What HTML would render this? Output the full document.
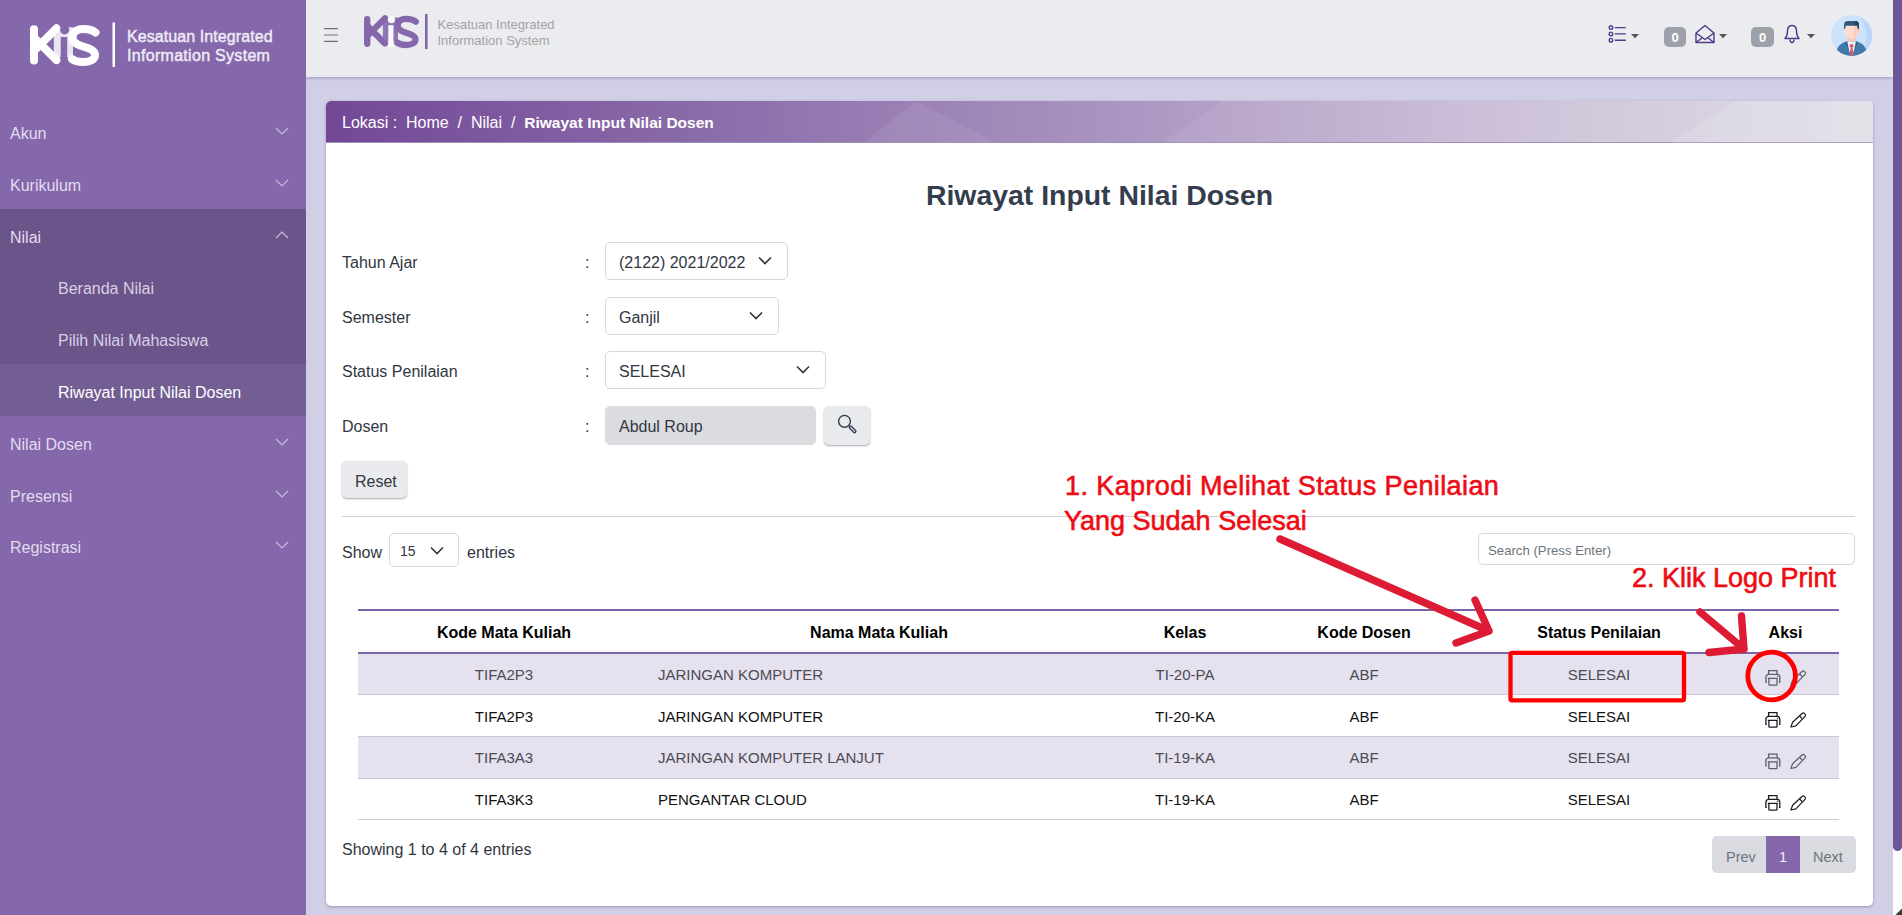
<!DOCTYPE html>
<html><head><meta charset="utf-8">
<style>
*{box-sizing:border-box;margin:0;padding:0}
html,body{width:1902px;height:915px;overflow:hidden;background:#D1CFE6;font-family:"Liberation Sans",sans-serif;}
.abs{position:absolute}
#sidebar{position:absolute;left:0;top:0;width:306px;height:915px;background:#8468AB;}
.nav{position:absolute;left:0;width:306px;height:52px;color:#E3DCEF;font-size:16px;}
.nav span{position:absolute;left:10px;top:18.5px;line-height:18px;white-space:nowrap}
.nav.sub span{left:58px}
.nav svg{position:absolute;left:275px;top:21px}
#topbar{position:absolute;left:306px;top:0;width:1587px;height:77px;background:#EBECEF;box-shadow:0 1px 3px rgba(90,90,130,.45);}
#scroll{position:absolute;left:1893px;top:0;width:9px;height:915px;background:#fff}
#thumb{position:absolute;left:1893px;top:0;width:9px;height:851px;background:#6E5595;border-radius:0 0 5px 5px}
#card{position:absolute;left:326px;top:101px;width:1547px;height:805px;background:#fff;border-radius:5px;box-shadow:0 1px 3px rgba(70,70,120,.45);overflow:hidden}
#crumb{position:absolute;left:0;top:0;width:1547px;height:42px;background:linear-gradient(90deg,#724896 0%,#8B6DAA 25%,#A993C0 50%,#C9BCD6 75%,#DEDCE5 100%);border-bottom:1px solid #9C8BB5}
#crumb .t{position:absolute;left:16px;top:13px;color:#fff;font-size:16px;line-height:18px;white-space:nowrap}
.lbl{position:absolute;left:16px;font-size:16px;color:#31363F;line-height:18px;white-space:nowrap}
.colon{position:absolute;left:259px;font-size:16px;color:#31363F;line-height:18px}
.sel{position:absolute;left:279px;height:38px;border:1px solid #D6D8DC;border-radius:5px;background:#fff;font-size:16px;color:#31363F}
.sel span{position:absolute;left:13px;top:11px;line-height:18px;white-space:nowrap}
.sel svg{position:absolute;top:13px}
.btn{position:absolute;background:#E9EAEE;border-radius:5px;box-shadow:0 1px 2px rgba(0,0,0,.35)}
table{border-collapse:collapse;position:absolute;left:32px;top:508px;width:1481px;table-layout:fixed}
th{font-size:16px;font-weight:bold;color:#000;height:43px;text-align:center;border-top:2px solid #7C64A8;border-bottom:2px solid #7C64A8;padding-top:2px}
td{font-size:15px;height:41.7px;text-align:center;border-bottom:1px solid #C9C8D4;color:#111;padding-top:1px}
tr.odd td{background:#E5E1EE;color:#4B4B55}
td.l{text-align:left;padding-left:8px}
.red{position:absolute;color:#EE0C14;font-size:27px;line-height:34px;white-space:nowrap;-webkit-text-stroke:0.6px #EE0C14}
</style></head>
<body>
<div id="sidebar">
  <svg class="abs" style="left:0;top:0" width="306" height="100">
    <defs>
      <g id="kiis">
        <rect x="24" y="2" width="19.2" height="30.3" fill="var(--lt)"/>
        <g fill="none" stroke="var(--fg)" stroke-linecap="round" stroke-width="8">
          <path d="M4.2 4V35.3"/>
          <path d="M4.2 25.6L26.7 3.1M4.2 12.4L26.7 34.9"/>
          <path d="M65.7 7.3C62.2 4.3 57.2 3.8 53.2 3.8C46.2 3.8 42.7 7.8 42.7 12.3C42.7 17.8 48.2 19.8 53.2 21.3C60.2 23.3 65.2 25.3 65.2 29.8C65.2 34.3 60.2 36.8 53.2 36.8C48.2 36.8 44.2 35.3 42.2 33.8"/>
        </g>
        <rect x="30.9" y="11.8" width="6.5" height="27.6" fill="var(--i)"/>
        <circle cx="34.8" cy="4.6" r="4.6" fill="var(--i)"/>
      </g>
    </defs>
    <use href="#kiis" x="29.8" y="25.2" style="--fg:#fff;--lt:#E9E5F1;--i:#8468AB"/>
    <rect x="112.5" y="22.5" width="2.5" height="44.5" fill="#fff"/>
    <text x="127" y="42" fill="#EFEAF6" stroke="#EFEAF6" stroke-width="0.45" font-size="16" letter-spacing="0.08" font-family="Liberation Sans">Kesatuan Integrated</text>
    <text x="127" y="61.3" fill="#EFEAF6" stroke="#EFEAF6" stroke-width="0.45" font-size="16" letter-spacing="0.3" font-family="Liberation Sans">Information System</text>
  </svg>
  <div class="nav" style="top:106px"><span>Akun</span><svg width="14" height="8"><path d="M1 1L7 7L13 1" fill="none" stroke="#C9BCDF" stroke-width="1.2"/></svg></div>
  <div class="nav" style="top:158px"><span>Kurikulum</span><svg width="14" height="8"><path d="M1 1L7 7L13 1" fill="none" stroke="#C9BCDF" stroke-width="1.2"/></svg></div>
  <div class="abs" style="left:0;top:209px;width:306px;height:155px;background:#6A5489"></div>
  <div class="abs" style="left:0;top:364px;width:306px;height:52px;background:#735E94"></div>
  <div class="nav" style="top:210px"><span>Nilai</span><svg width="14" height="8"><path d="M1 7L7 1L13 7" fill="none" stroke="#C9BCDF" stroke-width="1.2"/></svg></div>
  <div class="nav sub" style="top:261px;color:#D9D0E6"><span>Beranda Nilai</span></div>
  <div class="nav sub" style="top:313px;color:#D9D0E6"><span>Pilih Nilai Mahasiswa</span></div>
  <div class="nav sub" style="top:365px;color:#fff"><span>Riwayat Input Nilai Dosen</span></div>
  <div class="nav" style="top:417px"><span>Nilai Dosen</span><svg width="14" height="8"><path d="M1 1L7 7L13 1" fill="none" stroke="#C9BCDF" stroke-width="1.2"/></svg></div>
  <div class="nav" style="top:469px"><span>Presensi</span><svg width="14" height="8"><path d="M1 1L7 7L13 1" fill="none" stroke="#C9BCDF" stroke-width="1.2"/></svg></div>
  <div class="nav" style="top:520px"><span>Registrasi</span><svg width="14" height="8"><path d="M1 1L7 7L13 1" fill="none" stroke="#C9BCDF" stroke-width="1.2"/></svg></div>
</div>

<div id="topbar">
  <svg class="abs" style="left:0;top:0" width="300" height="77">
    <g stroke="#707070" stroke-width="1.2"><path d="M18 28.6H32M18 35H32M18 41.4H32"/></g>
    <use href="#kiis" transform="translate(57.9 15.9) scale(0.79)" style="--fg:#8468AB;--lt:#8D76B4;--i:#FAF9FD"/>
    <rect x="119" y="14" width="2.6" height="35" fill="#8468AB"/>
    <text x="131.5" y="29.2" fill="#A3A3A7" font-size="13" font-family="Liberation Sans">Kesatuan Integrated</text>
    <text x="131.5" y="45" fill="#A3A3A7" font-size="13" font-family="Liberation Sans">Information System</text>
  </svg>
  </div>
<svg class="abs" style="left:0;top:0" width="1902" height="77">
    <g fill="none" stroke="#50388A" stroke-width="1.4">
      <circle cx="1611" cy="27.6" r="1.8"/><circle cx="1611" cy="33.9" r="1.8"/><circle cx="1611" cy="40.2" r="1.8"/>
      <path d="M1614.8 27.6H1625.8M1614.8 33.9H1625.8M1614.8 40.2H1625.8"/>
    </g>
    <path d="M1631 34H1639L1635 38.2Z" fill="#555"/>
    <rect x="1664" y="27" width="22" height="20" rx="5" fill="#9EA1A9"/>
    <text x="1675" y="42" fill="#fff" font-size="13" font-weight="bold" text-anchor="middle" font-family="Liberation Sans">0</text>
    <g fill="none" stroke="#50388A" stroke-width="1.4" stroke-linejoin="round">
      <path d="M1696 33L1705 25.5L1714 33V42.5H1696Z"/>
      <path d="M1696 33L1705 39.5L1714 33M1696 42.5L1702.5 37.5M1714 42.5L1707.5 37.5"/>
    </g>
    <path d="M1719 34H1727L1723 38.2Z" fill="#555"/>
    <rect x="1751" y="27" width="23" height="20" rx="5" fill="#9EA1A9"/>
    <text x="1762.5" y="42" fill="#fff" font-size="13" font-weight="bold" text-anchor="middle" font-family="Liberation Sans">0</text>
    <g fill="none" stroke="#50388A" stroke-width="1.4" stroke-linejoin="round">
      <path d="M1785 38.5C1787 36.5 1787.5 34 1787.5 31C1787.5 27.5 1789.5 25.5 1792 25.5C1794.5 25.5 1796.5 27.5 1796.5 31C1796.5 34 1797 36.5 1799 38.5Z"/>
      <path d="M1790 39.5C1790 41.5 1791 42.5 1792 42.5C1793 42.5 1794 41.5 1794 39.5"/>
    </g>
    <path d="M1807 34H1815L1811 38.2Z" fill="#555"/>
    <circle cx="1851.6" cy="35.4" r="20.5" fill="#CDE3FC"/>
    <clipPath id="av"><circle cx="1851.6" cy="35.4" r="20.5"/></clipPath>
    <g clip-path="url(#av)">
      <path d="M1858.4 14.5Q1871 30 1863.5 50L1880 50L1880 10Z" fill="#BBD6FA"/>
      <path d="M1836.3 52Q1837.5 43.5 1847.5 41L1855.7 41Q1865.5 43.5 1866.8 52L1867 60L1836 60Z" fill="#4079AA"/>
      <path d="M1847.3 41.2L1851.6 56L1845.5 43Z M1855.9 41.2L1851.6 56L1857.7 43Z" fill="#2F5F8B"/>
      <path d="M1847.2 41.2H1855.9L1854 51L1851.6 55.5L1849.2 51Z" fill="#EAF7FD"/>
      <rect x="1847.7" y="36" width="8" height="5.4" fill="#FBC9B4"/>
      <path d="M1850 44.2H1853.2L1853.6 46.5L1852.4 47.5H1850.8L1849.6 46.5Z M1850.8 47.5H1852.4L1853.6 54L1851.6 56.5L1849.6 54Z" fill="#D95A6B"/>
      <path d="M1844.2 28Q1844.2 25.5 1846 25.5H1857Q1858.9 25.5 1858.9 28V31Q1858.9 34 1856 36.5L1853.5 38.2Q1851.6 39.2 1849.7 38.2L1847.2 36.5Q1844.2 34 1844.2 31Z" fill="#FFDCCD"/>
      <path d="M1853.5 25.5H1857Q1858.9 25.5 1858.9 28V31Q1858.9 34 1856 36.5L1853.5 38.2Q1852.8 36.5 1853.5 34Z" fill="#FFCDBA"/>
      <path d="M1844 29.5V25Q1844 21 1848 21H1855.5Q1857.5 21 1858.5 22.5Q1859 23.5 1859 25V29.5L1857.5 28V25.8H1845.5V28Z" fill="#335A7B"/>
      <path d="M1854 21H1855.5Q1859 21 1859 25V29.5L1857.5 28V25.8H1855Z" fill="#244663"/>
    </g>
</svg>
<div>
</div>

<div id="scroll"></div>
<div id="thumb"></div>
<svg class="abs" style="left:1893px;top:905px" width="9" height="10"><path d="M9 3.5V10H2.5Z" fill="#3a3a3a"/></svg>

<div id="card">
  <div id="crumb"><svg class="abs" style="left:0;top:0" width="1547" height="42"><g fill="#fff" opacity=".07"><path d="M537 42L590 0L671 42Z"/><path d="M835 42L897 0H1547V42Z"/></g><path d="M1344 42L1410 0H1547V42Z" fill="#fff" opacity=".14"/><g></g></svg><div class="t">Lokasi :&nbsp; Home&nbsp; /&nbsp; Nilai&nbsp; /&nbsp; <b style="font-size:15.5px">Riwayat Input Nilai Dosen</b></div></div>
  <div class="abs" style="left:0;top:78px;width:1547px;text-align:center;font-size:28.4px;font-weight:bold;color:#343D4E;line-height:32px;padding-left:0px">Riwayat Input Nilai Dosen</div>

  <div class="lbl" style="top:153px">Tahun Ajar</div><div class="colon" style="top:153px">:</div>
  <div class="sel" style="top:141px;width:183px"><span>(2122) 2021/2022</span><svg style="left:152px" width="14" height="9"><path d="M1 1.5L7 7.5L13 1.5" fill="none" stroke="#333" stroke-width="1.6"/></svg></div>
  <div class="lbl" style="top:208px">Semester</div><div class="colon" style="top:208px">:</div>
  <div class="sel" style="top:196px;width:174px"><span>Ganjil</span><svg style="left:143px" width="14" height="9"><path d="M1 1.5L7 7.5L13 1.5" fill="none" stroke="#333" stroke-width="1.6"/></svg></div>
  <div class="lbl" style="top:262px">Status Penilaian</div><div class="colon" style="top:262px">:</div>
  <div class="sel" style="top:250px;width:221px"><span>SELESAI</span><svg style="left:190px" width="14" height="9"><path d="M1 1.5L7 7.5L13 1.5" fill="none" stroke="#333" stroke-width="1.6"/></svg></div>
  <div class="lbl" style="top:317px">Dosen</div><div class="colon" style="top:317px">:</div>
  <div class="sel" style="top:305px;width:211px;height:39px;background:#DADCE0;border-color:#DADCE0"><span>Abdul Roup</span></div>
  <div class="btn" style="left:498px;top:305px;width:46px;height:39px"><svg class="abs" style="left:13px;top:7px" width="22" height="22"><circle cx="7.5" cy="8.3" r="5.9" fill="none" stroke="#2E3A4A" stroke-width="1.35"/><path d="M13.6 14.4L17.6 18.4" stroke="#2E3A4A" stroke-width="3.9" stroke-linecap="round"/><path d="M13.6 14.4L17.6 18.4" stroke="#E9EAEE" stroke-width="1.2" stroke-linecap="round"/></svg></div>
  <div class="btn" style="left:16px;top:360px;width:65px;height:37px"><span class="abs" style="left:13px;top:12px;font-size:16px;color:#31363F;line-height:18px">Reset</span></div>
  <div class="abs" style="left:16px;top:415px;width:1513px;height:1px;background:#D0D0D4"></div>

  <div class="lbl" style="top:443px">Show</div>
  <div class="sel" style="left:63px;top:432px;width:70px;height:34px;font-size:14px"><span style="left:10px;top:8px">15</span><svg style="left:40px;top:12px" width="14" height="9"><path d="M1 1.5L7 7.5L13 1.5" fill="none" stroke="#333" stroke-width="1.6"/></svg></div>
  <div class="lbl" style="left:141px;top:443px">entries</div>
  <div class="sel" style="left:1152px;top:432px;width:377px;height:32px;font-size:14px;color:#6C757D"><span style="left:9px;top:8px;font-size:13.2px">Search (Press Enter)</span></div>

  <table>
    <colgroup><col style="width:292px"><col style="width:458px"><col style="width:154px"><col style="width:204px"><col style="width:266px"><col style="width:107px"></colgroup>
    <tr><th>Kode Mata Kuliah</th><th>Nama Mata Kuliah</th><th>Kelas</th><th>Kode Dosen</th><th>Status Penilaian</th><th>Aksi</th></tr>
    <tr class="odd"><td>TIFA2P3</td><td class="l">JARINGAN KOMPUTER</td><td>TI-20-PA</td><td>ABF</td><td>SELESAI</td><td class="ic"></td></tr>
    <tr><td>TIFA2P3</td><td class="l">JARINGAN KOMPUTER</td><td>TI-20-KA</td><td>ABF</td><td>SELESAI</td><td class="ic"></td></tr>
    <tr class="odd"><td>TIFA3A3</td><td class="l">JARINGAN KOMPUTER LANJUT</td><td>TI-19-KA</td><td>ABF</td><td>SELESAI</td><td class="ic"></td></tr>
    <tr><td>TIFA3K3</td><td class="l">PENGANTAR CLOUD</td><td>TI-19-KA</td><td>ABF</td><td>SELESAI</td><td class="ic"></td></tr>
  </table>

  <div class="lbl" style="top:740px">Showing 1 to 4 of 4 entries</div>
  <div class="abs" style="left:1386px;top:735px;width:144px;height:37px;background:#D9DBE0;border-radius:5px;overflow:hidden;font-size:14.5px;color:#6C757D">
    <span class="abs" style="left:14px;top:11.5px;line-height:18px">Prev</span>
    <div class="abs" style="left:54px;top:0;width:34px;height:37px;background:#8468AB;color:#F4F0FA"><span class="abs" style="left:13px;top:11.5px;line-height:18px">1</span></div>
    <span class="abs" style="left:101px;top:11.5px;line-height:18px">Next</span>
  </div>
</div>

<svg class="abs" style="left:0;top:0" width="1902" height="915">
  <defs>
    <g id="prn" fill="none" stroke-width="1.3"><path d="M3.4 4.2V0.7H11.8V4.2"/><path d="M1.6 12.4H0.7V7.2C0.7 5.4 1.9 4.4 3.5 4.4H11.8C13.4 4.4 14.6 5.4 14.6 7.2V12.4H13.7"/><path d="M2.6 8.3H12.6M3.7 8.3V14.4Q3.7 15.2 4.5 15.2H11Q11.8 15.2 11.8 14.4V8.3"/><circle cx="12.3" cy="6.5" r="0.6" stroke="none" fill="currentColor"/></g>
    <g id="pen" fill="none" stroke-width="1.2" stroke-linejoin="round"><path d="M0.9 14.7L2.6 9.9L12.3 0.9Q13.2 0.2 14.1 0.9L15.2 2Q15.9 2.9 15.2 3.8L5.9 13.6Z"/><path d="M9.6 3.7L12.2 6.4"/></g>
  </defs>
  <use href="#prn" x="1765.2" y="670" stroke="#5A5F6B" color="#5A5F6B"/><use href="#pen" x="1790" y="670.3" stroke="#5A5F6B"/>
  <use href="#prn" x="1765.2" y="712" stroke="#1A1A24" color="#1A1A24"/><use href="#pen" x="1790" y="712.3" stroke="#1A1A24"/>
  <use href="#prn" x="1765.2" y="753.5" stroke="#5A5F6B" color="#5A5F6B"/><use href="#pen" x="1790" y="753.8" stroke="#5A5F6B"/>
  <use href="#prn" x="1765.2" y="795" stroke="#1A1A24" color="#1A1A24"/><use href="#pen" x="1790" y="795.3" stroke="#1A1A24"/>
</svg>

<!-- annotations -->
<div class="red" style="left:1065px;top:469px;letter-spacing:.4px">1. Kaprodi Melihat Status Penilaian</div>
<div class="red" style="left:1064px;top:504px">Yang Sudah Selesai</div>
<div class="red" style="left:1632px;top:561px">2. Klik Logo Print</div>
<svg class="abs" style="left:0;top:0" width="1902" height="915">
  <g fill="none" stroke="#DE1B34" stroke-width="7.4" stroke-linecap="round" stroke-linejoin="round">
    <path d="M1280 539L1489 631M1475 600L1489 631L1456 643"/>
    <path d="M1700 612L1744 649M1741.5 616L1744 649L1709 652.5"/>
  </g>
  <g fill="none" stroke="#FF0000" stroke-width="4.3">
    <rect x="1510.5" y="652.8" width="173.5" height="47.5" rx="1.5"/>
    <circle cx="1771.6" cy="676" r="23.8" stroke-width="4.8"/>
  </g>
</svg>
</body></html>
